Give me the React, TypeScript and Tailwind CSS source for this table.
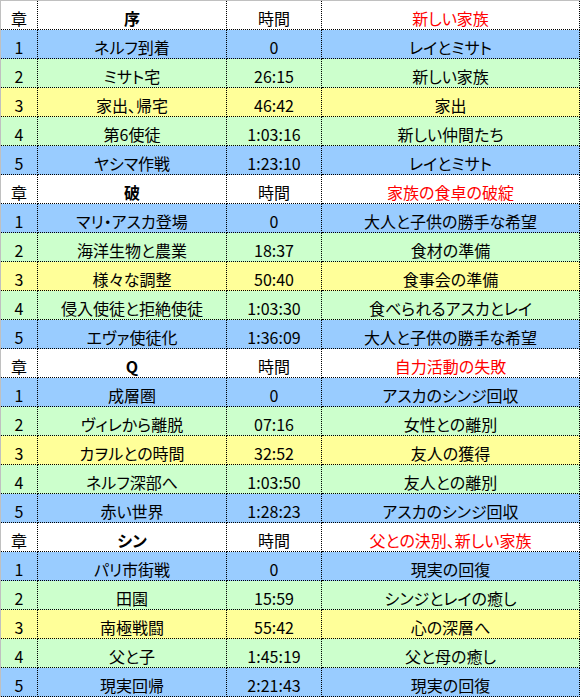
import React from "react";

type Row = [string, string, string, string];
type Section = { title: string; theme: string; rows: Row[] };

const sections: Section[] = [
  {
    title: "序",
    theme: "新しい家族",
    rows: [
      ["1", "ネルフ到着", "0", "レイとミサト"],
      ["2", "ミサト宅", "26:15", "新しい家族"],
      ["3", "家出、帰宅", "46:42", "家出"],
      ["4", "第6使徒", "1:03:16", "新しい仲間たち"],
      ["5", "ヤシマ作戦", "1:23:10", "レイとミサト"],
    ],
  },
  {
    title: "破",
    theme: "家族の食卓の破綻",
    rows: [
      ["1", "マリ・アスカ登場", "0", "大人と子供の勝手な希望"],
      ["2", "海洋生物と農業", "18:37", "食材の準備"],
      ["3", "様々な調整", "50:40", "食事会の準備"],
      ["4", "侵入使徒と拒絶使徒", "1:03:30", "食べられるアスカとレイ"],
      ["5", "エヴァ使徒化", "1:36:09", "大人と子供の勝手な希望"],
    ],
  },
  {
    title: "Q",
    theme: "自力活動の失敗",
    rows: [
      ["1", "成層圏", "0", "アスカのシンジ回収"],
      ["2", "ヴィレから離脱", "07:16", "女性との離別"],
      ["3", "カヲルとの時間", "32:52", "友人の獲得"],
      ["4", "ネルフ深部へ", "1:03:50", "友人との離別"],
      ["5", "赤い世界", "1:28:23", "アスカのシンジ回収"],
    ],
  },
  {
    title: "シン",
    theme: "父との決別、新しい家族",
    rows: [
      ["1", "パリ市街戦", "0", "現実の回復"],
      ["2", "田園", "15:59", "シンジとレイの癒し"],
      ["3", "南極戦闘", "55:42", "心の深層へ"],
      ["4", "父と子", "1:45:19", "父と母の癒し"],
      ["5", "現実回帰", "2:21:43", "現実の回復"],
    ],
  },
];

const rowBg = ["bg-[#99ccff]", "bg-[#ccffcc]", "bg-[#ffff99]", "bg-[#ccffcc]", "bg-[#99ccff]"];

const cell =
  "h-[29px] border-r border-b border-dotted border-black pt-[7px] leading-[20px] text-center whitespace-nowrap overflow-hidden";

export default function App() {
  return (
    <div className="w-[581px] h-[697px] bg-white font-['Noto_Sans_CJK_JP',sans-serif] text-[16px] text-black [font-feature-settings:'palt']">
      <div className="w-[580px] border-t border-l border-[#c0c0c0]">
        <div className="grid grid-cols-[37px_189px_95px_258px]">
          {sections.map((s) => (
            <React.Fragment key={s.title}>
              <div className={`${cell} bg-white`}>章</div>
              <div className={`${cell} bg-white font-bold`}>{s.title}</div>
              <div className={`${cell} bg-white`}>時間</div>
              <div className={`${cell} bg-white text-[#ff0000]`}>{s.theme}</div>
              {s.rows.map((r, i) => (
                <React.Fragment key={s.title + i}>
                  <div className={`${cell} ${rowBg[i]}`}>{r[0]}</div>
                  <div className={`${cell} ${rowBg[i]}`}>{r[1]}</div>
                  <div className={`${cell} ${rowBg[i]}`}>{r[2]}</div>
                  <div className={`${cell} ${rowBg[i]}`}>{r[3]}</div>
                </React.Fragment>
              ))}
            </React.Fragment>
          ))}
        </div>
      </div>
    </div>
  );
}
